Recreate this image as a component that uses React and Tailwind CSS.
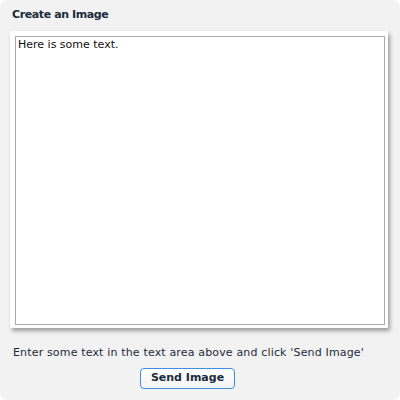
import { useState } from "react";

export default function App() {
  const [text, setText] = useState("Here is some text.");

  return (
    <div className="w-[400px] h-[400px] bg-white">
      <div
        className="w-[400px] h-[400px] bg-[#f2f2f2] rounded-[8px] flex flex-col text-[#1c2b3a] text-[11px]"
        style={{ fontFamily: '"DejaVu Sans", Verdana, sans-serif' }}
      >
        <h1 className="font-bold text-[11px] leading-[14px] tracking-[-0.4px] pl-[12px] pt-[8px]">
          Create an Image
        </h1>

        {/* text area box */}
        <div className="ml-[10px] mt-[9px] w-[378px] h-[297px] bg-white pl-[5px] pt-[5px] pr-[3px] pb-[3px] shadow-[2px_3px_4px_rgba(0,0,0,0.35)]">
          <textarea
            value={text}
            onChange={(e) => setText(e.target.value)}
            className="w-full h-full border border-[#a9a9a9] resize-none outline-none px-[2px] pt-[1px] pb-[2px] text-[11px] leading-[14px] text-[#111]"
            style={{ fontFamily: '"DejaVu Sans", Verdana, sans-serif' }}
          />
        </div>

        <p className="pl-[13px] mt-[18px] leading-[14px] tracking-[0.16px]">
          Enter some text in the text area above and click 'Send Image'
        </p>

        <div className="flex justify-center pr-[25px] mt-[8px]">
          <button className="w-[95px] h-[21px] rounded-[4px] border border-[#3d8fe0] bg-gradient-to-b from-white to-[#f3f3f3] font-bold text-[11px] text-[#1c2b3a]">
            Send Image
          </button>
        </div>
      </div>
    </div>
  );
}
